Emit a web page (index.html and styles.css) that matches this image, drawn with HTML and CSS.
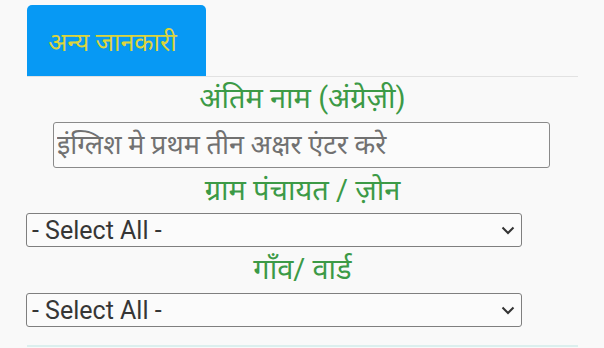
FILE: index.html
```html
<!DOCTYPE html>
<html lang="hi">
<head>
<meta charset="utf-8">
<link rel="stylesheet" href="styles.css">
</head>
<body>
<div class="panel">
  <div class="tabs">
    <div class="tab">अन्य जानकारी</div>
  </div>
  <div class="form">
    <label class="lbl">अंतिम नाम (अंग्रेज़ी)</label>
    <div class="input-row">
      <input class="txt" type="text" placeholder="इंग्लिश मे प्रथम तीन अक्षर एंटर करे">
    </div>
    <label class="lbl lbl2">ग्राम पंचायत / ज़ोन</label>
    <div class="sel sel1">
      <span>- Select All -</span>
      <svg class="chev" width="14" height="9" viewBox="0 0 14 9"><path d="M1.5 1.5 L7 7 L12.5 1.5" fill="none" stroke="#333" stroke-width="2"/></svg>
    </div>
    <label class="lbl lbl3">गाँव/ वार्ड</label>
    <div class="sel">
      <span>- Select All -</span>
      <svg class="chev" width="14" height="9" viewBox="0 0 14 9"><path d="M1.5 1.5 L7 7 L12.5 1.5" fill="none" stroke="#333" stroke-width="2"/></svg>
    </div>
  </div>
  <div class="bottom-line"></div>
</div>
</body>
</html>
```
FILE: styles.css
```css
html, body {
  margin: 0;
  padding: 0;
  background: #f9f9f9;
}
body {
  font-family: Roboto, "Noto Sans", "Noto Sans Devanagari", sans-serif;
}
.panel {
  margin-left: 27px;
  width: 551px;
  padding-top: 5px;
}
.tabs {
  display: flex;
  border-bottom: 1px solid #e2e2e2;
}
.tab {
  width: 179px;
  height: 71px;
  background: #0799f4;
  border-radius: 5px 5px 0 0;
  color: #dcd43c;
  font-size: 25px;
  display: flex;
  align-items: center;
  justify-content: center;
  padding-right: 8px;
  box-sizing: border-box;
}
.form {
  display: flex;
  flex-direction: column;
}
.lbl {
  display: block;
  text-align: center;
  color: #3c9a46;
  font-size: 29px;
  line-height: 34px;
  margin-top: 4px;
}
.input-row {
  display: flex;
  padding-left: 26px;
  margin-top: 7px;
}
.txt {
  width: 497px;
  height: 46px;
  box-sizing: border-box;
  border: 1.5px solid #8a8a8a;
  border-radius: 3px;
  background: #fbfbfb;
  font-family: inherit;
  font-size: 27px;
  padding: 0 3px;
  color: #333;
  outline: none;
}
.txt::placeholder {
  color: #717171;
}
.lbl2 {
  margin-top: 5px;
}
.lbl3 {
  margin-top: 5px;
}
.sel {
  width: 496px;
  height: 34px;
  margin-left: -1px;
  margin-top: 7px;
  box-sizing: border-box;
  border: 1.5px solid #7f7f7f;
  border-radius: 3px;
  background: #fbfbfb;
  display: flex;
  align-items: center;
  justify-content: space-between;
  padding: 0 6px 0 5px;
  font-size: 25px;
  color: #363636;
}
.sel1 {
  margin-top: 6px;
}
.chev {
  display: block;
}
.bottom-line {
  margin-top: 18px;
  height: 2px;
  background: #dcefee;
}
```
